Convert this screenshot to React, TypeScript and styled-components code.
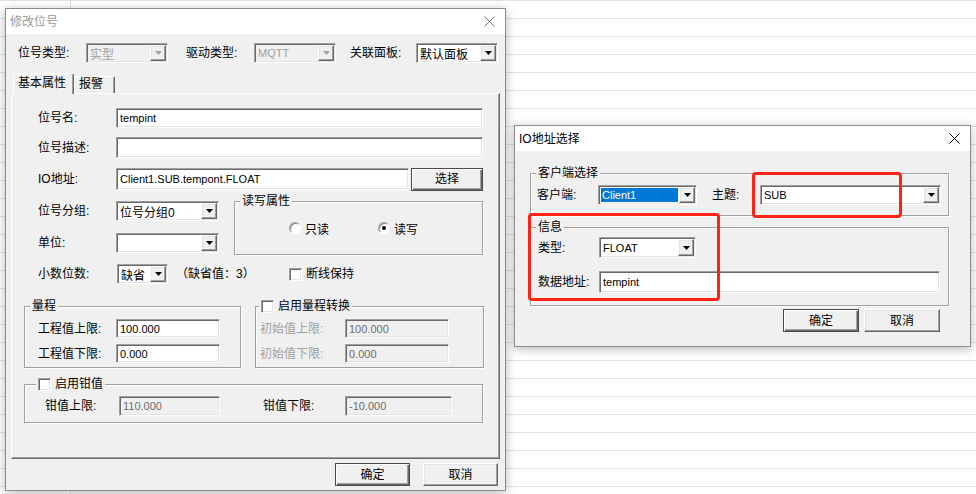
import React from "react";
import styled, { createGlobalStyle, css } from "styled-components";

const GlobalStyle = createGlobalStyle`
  html, body {
    margin: 0;
    padding: 0;
  }
  body {
    font-family: "Liberation Sans", "Noto Sans CJK SC", sans-serif;
    font-size: 12px;
    color: #000;
  }
`;

const sunken = css`
  border: 1px solid;
  border-color: #a0a0a0 #ffffff #ffffff #a0a0a0;
  box-shadow: inset 1px 1px 0 #696969, inset -1px -1px 0 #e3e3e3;
`;

const raised = css`
  border: 1px solid;
  border-color: #ffffff #696969 #696969 #ffffff;
  box-shadow: inset -1px -1px 0 #a0a0a0, inset 1px 1px 0 #e3e3e3;
`;

// spreadsheet behind the dialogs
const Desktop = styled.div`
  position: relative;
  width: 976px;
  height: 494px;
  overflow: hidden;
  background-color: #ffffff;
  background-image: linear-gradient(
      to right,
      transparent 70px,
      #e2e2e2 70px,
      #e2e2e2 71px,
      transparent 71px
    ),
    repeating-linear-gradient(
      to bottom,
      #e2e2e2 0,
      #e2e2e2 1px,
      transparent 1px,
      transparent 18px
    );
`;

interface IWindowProps {
  $x: number;
  $y: number;
  $w: number;
  $h: number;
}

const Window = styled.div<IWindowProps>`
  position: absolute;
  left: ${p => p.$x}px;
  top: ${p => p.$y}px;
  width: ${p => p.$w}px;
  height: ${p => p.$h}px;
  box-sizing: border-box;
  border: 1px solid #8c8c8c;
  background: #f0f0f0;
  box-shadow: 0 2px 10px rgba(0, 0, 0, 0.28);
  display: flex;
  flex-direction: column;
`;

const TitleBar = styled.div<{ $inactive?: boolean }>`
  display: flex;
  align-items: center;
  justify-content: space-between;
  height: 25px;
  flex-shrink: 0;
  padding: 0 10px 0 4px;
  background: #ffffff;
  color: ${p => (p.$inactive ? "#9a9a9a" : "#000000")};
  line-height: 16px;
`;

const WindowBody = styled.div`
  flex: 1;
  display: flex;
  flex-direction: column;
  background: #f0f0f0;
`;

const Row = styled.div<{ $mt?: number; $ml?: number; $h?: number }>`
  display: flex;
  align-items: center;
  flex-shrink: 0;
  height: ${p => p.$h ?? 20}px;
  margin-top: ${p => p.$mt ?? 0}px;
  margin-left: ${p => p.$ml ?? 0}px;
`;

const Label = styled.span<{ $w?: number; $ml?: number; $disabled?: boolean }>`
  flex-shrink: 0;
  width: ${p => (p.$w ? `${p.$w}px` : "auto")};
  margin-left: ${p => p.$ml ?? 0}px;
  color: ${p => (p.$disabled ? "#a0a0a0" : "#000000")};
  white-space: nowrap;
  line-height: 16px;
`;

const TextBox = styled.div<{ $w: number; $h?: number; $disabled?: boolean }>`
  ${sunken};
  box-sizing: border-box;
  flex-shrink: 0;
  width: ${p => p.$w}px;
  height: ${p => p.$h ?? 20}px;
  display: flex;
  align-items: center;
  padding-left: 3px;
  background: ${p => (p.$disabled ? "#f0f0f0" : "#ffffff")};
  color: ${p => (p.$disabled ? "#6d6d6d" : "#000000")};
  font-size: 11px;
  white-space: nowrap;
  overflow: hidden;
`;

const ComboFrame = styled.div<{ $w: number; $h?: number; $disabled?: boolean }>`
  ${sunken};
  box-sizing: border-box;
  flex-shrink: 0;
  width: ${p => p.$w}px;
  height: ${p => p.$h ?? 20}px;
  display: flex;
  background: ${p => (p.$disabled ? "#f0f0f0" : "#ffffff")};
`;

const ComboValue = styled.span<{
  $selected?: boolean;
  $disabled?: boolean;
  $small?: boolean;
}>`
  flex: 1;
  display: flex;
  align-items: center;
  margin: ${p => (p.$selected ? "2px 1px 2px 2px" : "1px 0 1px 1px")};
  padding-left: ${p => (p.$selected ? 1 : 2)}px;
  background: ${p => (p.$selected ? "#0078d7" : "transparent")};
  color: ${p =>
    p.$selected ? "#ffffff" : p.$disabled ? "#a0a0a0" : "#000000"};
  font-size: ${p => (p.$small ? 11 : 12)}px;
  white-space: nowrap;
  overflow: hidden;
`;

const DropButton = styled.span`
  ${raised};
  box-sizing: border-box;
  width: 16px;
  margin: 1px 1px 1px 0;
  display: flex;
  align-items: center;
  justify-content: center;
  background: #f0f0f0;
`;

interface IComboProps {
  w: number;
  h?: number;
  value: string;
  disabled?: boolean;
  selected?: boolean;
  small?: boolean;
}

const Combo = ({ w, h, value, disabled, selected, small }: IComboProps) => (
  <ComboFrame $w={w} $h={h} $disabled={disabled}>
    <ComboValue $selected={selected} $disabled={disabled} $small={small}>
      {value}
    </ComboValue>
    <DropButton>
      <svg width="7" height="4" viewBox="0 0 7 4">
        <path d="M0 0H7L3.5 4Z" fill={disabled ? "#a0a0a0" : "#000000"} />
      </svg>
    </DropButton>
  </ComboFrame>
);

const PushButton = styled.div<{ $w: number; $default?: boolean }>`
  box-sizing: border-box;
  width: ${p => p.$w}px;
  height: 23px;
  display: flex;
  align-items: center;
  justify-content: center;
  flex-shrink: 0;
  background: #f0f0f0;
  line-height: 16px;
  ${p =>
    p.$default
      ? css`
          border: 1px solid #4a4a4a;
          box-shadow: inset 1px 1px 0 #ffffff, inset -1px -1px 0 #696969,
            inset -2px -2px 0 #a0a0a0;
        `
      : raised};
`;

const ButtonRow = styled.div<{ $mt: number; $pr: number; $gap: number }>`
  display: flex;
  justify-content: flex-end;
  gap: ${p => p.$gap}px;
  margin-top: ${p => p.$mt}px;
  padding-right: ${p => p.$pr}px;
`;

const CheckBox = styled.span`
  ${sunken};
  box-sizing: border-box;
  display: block;
  flex-shrink: 0;
  width: 13px;
  height: 13px;
  background: #ffffff;
`;

const RadioCircle = styled.span<{ $checked?: boolean }>`
  box-sizing: border-box;
  flex-shrink: 0;
  width: 12px;
  height: 12px;
  border-radius: 50%;
  border: 1px solid;
  border-color: #a0a0a0 #ffffff #ffffff #a0a0a0;
  box-shadow: inset 1px 1px 0 #8a8a8a;
  background: #ffffff;
  display: flex;
  align-items: center;
  justify-content: center;
  &::after {
    content: "";
    display: ${p => (p.$checked ? "block" : "none")};
    width: 4px;
    height: 4px;
    border-radius: 50%;
    background: #000000;
  }
`;

const RadioItem = styled.span<{ $w: number }>`
  display: flex;
  align-items: center;
  gap: 4px;
  width: ${p => p.$w}px;
`;

interface IGroupProps {
  $w: number;
  $h: number;
  $mt?: number;
  $ml?: number;
}

const GroupBox = styled.div<IGroupProps>`
  position: relative;
  box-sizing: border-box;
  flex-shrink: 0;
  width: ${p => p.$w}px;
  height: ${p => p.$h}px;
  margin-top: ${p => p.$mt ?? 0}px;
  margin-left: ${p => p.$ml ?? 0}px;
  border: 1px solid #a0a0a0;
  box-shadow: inset 1px 1px 0 #ffffff, 1px 1px 0 #ffffff;
`;

const GroupCaption = styled.div<{ $left?: number }>`
  position: absolute;
  top: -8px;
  left: ${p => p.$left ?? 5}px;
  height: 14px;
  padding: 0 2px;
  display: flex;
  align-items: center;
  gap: 4px;
  background: #f0f0f0;
  line-height: 14px;
  white-space: nowrap;
`;

const Columns = styled.div<{ $mt: number; $ml: number }>`
  display: flex;
  margin-top: ${p => p.$mt}px;
  margin-left: ${p => p.$ml}px;
`;

const Stack = styled.div`
  display: flex;
  flex-direction: column;
`;

const TabStrip = styled.div`
  display: flex;
  align-items: flex-end;
  height: 20px;
  margin: 10px 0 0 7px;
`;

const Tab = styled.div<{ $active?: boolean; $w: number }>`
  position: relative;
  z-index: ${p => (p.$active ? 1 : 0)};
  box-sizing: border-box;
  width: ${p => p.$w}px;
  height: ${p => (p.$active ? 21 : 17)}px;
  margin-bottom: ${p => (p.$active ? -1 : 0)}px;
  padding: ${p => (p.$active ? "2px 0 0 4px" : "0 0 0 4px")};
  border: 1px solid;
  border-bottom: none;
  border-color: #ffffff #696969 transparent #ffffff;
  border-radius: 2px 2px 0 0;
  box-shadow: inset -1px 0 0 #a0a0a0;
  background: #f0f0f0;
  line-height: 15px;
`;

const TabPanel = styled.div`
  box-sizing: border-box;
  height: 366px;
  margin: 0 5px;
  display: flex;
  flex-direction: column;
  border: 1px solid;
  border-color: #ffffff #696969 #696969 #ffffff;
  box-shadow: inset -1px -1px 0 #a0a0a0;
`;

const Hint = styled.span<{ $w: number; $ml: number }>`
  flex-shrink: 0;
  width: ${p => p.$w}px;
  margin-left: ${p => p.$ml}px;
  white-space: nowrap;
  line-height: 16px;
`;

const Annotation = styled.div<IWindowProps>`
  position: absolute;
  left: ${p => p.$x}px;
  top: ${p => p.$y}px;
  width: ${p => p.$w}px;
  height: ${p => p.$h}px;
  box-sizing: border-box;
  border: 3px solid #ff2216;
  border-radius: 4px;
`;

const CloseGlyph = ({ color }: { color: string }) => (
  <svg width="11" height="11" viewBox="0 0 11 11">
    <path d="M0.5 0.5L10.5 10.5M10.5 0.5L0.5 10.5" stroke={color} strokeWidth="1" />
  </svg>
);

const TagEditor = () => (
  <Window $x={5} $y={8} $w={501} $h={483}>
    <TitleBar $inactive>
      <span>修改位号</span>
      <CloseGlyph color="#6e6e6e" />
    </TitleBar>
    <WindowBody>
      <Row $mt={9} $ml={12}>
        <Label $w={68}>位号类型:</Label>
        <Combo w={82} value="实型" disabled />
        <Label $w={68} $ml={18}>
          驱动类型:
        </Label>
        <Combo w={82} value="MQTT" disabled small />
        <Label $w={66} $ml={14}>
          关联面板:
        </Label>
        <Combo w={82} value="默认面板" />
      </Row>

      <TabStrip>
        <Tab $active $w={61}>
          基本属性
        </Tab>
        <Tab $w={41}>报警</Tab>
      </TabStrip>

      <TabPanel>
        <Row $mt={14} $ml={26}>
          <Label $w={78}>位号名:</Label>
          <TextBox $w={367}>tempint</TextBox>
        </Row>
        <Row $mt={9} $ml={26} $h={21}>
          <Label $w={78}>位号描述:</Label>
          <TextBox $w={367} $h={21} />
        </Row>
        <Row $mt={10} $ml={26} $h={22}>
          <Label $w={78}>IO地址:</Label>
          <TextBox $w={293} $h={22}>
            Client1.SUB.tempont.FLOAT
          </TextBox>
          <Label $ml={2}>
            <PushButton $w={72} $default>
              选择
            </PushButton>
          </Label>
        </Row>

        <Columns $mt={11} $ml={26}>
          <Stack>
            <Row>
              <Label $w={78}>位号分组:</Label>
              <Combo w={103} value="位号分组0" />
            </Row>
            <Row $mt={12}>
              <Label $w={78}>单位:</Label>
              <Combo w={103} value="" />
            </Row>
          </Stack>
          <GroupBox $w={249} $h={54} $ml={15}>
            <GroupCaption>读写属性</GroupCaption>
            <Row $mt={19} $ml={54} $h={14}>
              <RadioItem $w={89}>
                <RadioCircle />
                只读
              </RadioItem>
              <RadioItem $w={60}>
                <RadioCircle $checked />
                读写
              </RadioItem>
            </Row>
          </GroupBox>
        </Columns>

        <Row $mt={9} $ml={26}>
          <Label $w={79}>小数位数:</Label>
          <Combo w={51} value="缺省" />
          <Hint $w={113} $ml={8}>
            （缺省值：3）
          </Hint>
          <CheckBox />
          <Label $ml={4}>断线保持</Label>
        </Row>

        <Columns $mt={22} $ml={12}>
          <GroupBox $w={217} $h={62}>
            <GroupCaption $left={5}>量程</GroupCaption>
            <Row $mt={12} $ml={13} $h={19}>
              <Label $w={78}>工程值上限:</Label>
              <TextBox $w={104} $h={19}>
                100.000
              </TextBox>
            </Row>
            <Row $mt={6} $ml={13} $h={19}>
              <Label $w={78}>工程值下限:</Label>
              <TextBox $w={104} $h={19}>
                0.000
              </TextBox>
            </Row>
          </GroupBox>
          <GroupBox $w={229} $h={62} $ml={14}>
            <GroupCaption $left={3}>
              <CheckBox />
              启用量程转换
            </GroupCaption>
            <Row $mt={12} $ml={4} $h={19}>
              <Label $w={85} $disabled>
                初始值上限:
              </Label>
              <TextBox $w={104} $h={19} $disabled>
                100.000
              </TextBox>
            </Row>
            <Row $mt={6} $ml={4} $h={19}>
              <Label $w={85} $disabled>
                初始值下限:
              </Label>
              <TextBox $w={104} $h={19} $disabled>
                0.000
              </TextBox>
            </Row>
          </GroupBox>
        </Columns>

        <GroupBox $w={459} $h={39} $mt={16} $ml={12}>
          <GroupCaption $left={11}>
            <CheckBox />
            启用钳值
          </GroupCaption>
          <Row $mt={11} $ml={20}>
            <Label $w={74}>钳值上限:</Label>
            <TextBox $w={101} $disabled>
              110.000
            </TextBox>
            <Label $w={82} $ml={43}>
              钳值下限:
            </Label>
            <TextBox $w={107} $disabled>
              -10.000
            </TextBox>
          </Row>
        </GroupBox>
      </TabPanel>

      <ButtonRow $mt={4} $pr={7} $gap={13}>
        <PushButton $w={75} $default>
          确定
        </PushButton>
        <PushButton $w={75}>取消</PushButton>
      </ButtonRow>
    </WindowBody>
  </Window>
);

const AddressPicker = () => (
  <Window $x={514} $y={125} $w={457} $h={222}>
    <TitleBar>
      <span>IO地址选择</span>
      <CloseGlyph color="#000000" />
    </TitleBar>
    <WindowBody>
      <GroupBox $w={419} $h={43} $mt={22} $ml={15}>
        <GroupCaption $left={5}>客户端选择</GroupCaption>
        <Row $mt={11} $ml={6}>
          <Label $w={61}>客户端:</Label>
          <Combo w={99} value="Client1" selected small />
          <Label $w={48} $ml={15}>
            主题:
          </Label>
          <Combo w={181} value="SUB" small />
        </Row>
      </GroupBox>

      <GroupBox $w={419} $h={79} $mt={11} $ml={15}>
        <GroupCaption $left={5}>信息</GroupCaption>
        <Row $mt={9} $ml={7} $h={21}>
          <Label $w={61}>类型:</Label>
          <Combo w={97} h={21} value="FLOAT" small />
        </Row>
        <Row $mt={13} $ml={7} $h={22}>
          <Label $w={61}>数据地址:</Label>
          <TextBox $w={341} $h={22}>
            tempint
          </TextBox>
        </Row>
      </GroupBox>

      <ButtonRow $mt={3} $pr={30} $gap={5}>
        <PushButton $w={76} $default>
          确定
        </PushButton>
        <PushButton $w={76}>取消</PushButton>
      </ButtonRow>
    </WindowBody>
  </Window>
);

const App = () => (
  <>
    <GlobalStyle />
    <Desktop>
      <TagEditor />
      <AddressPicker />
      <Annotation $x={752} $y={172} $w={150} $h={46} />
      <Annotation $x={528} $y={213} $w={192} $h={88} />
    </Desktop>
  </>
);

export default App;
